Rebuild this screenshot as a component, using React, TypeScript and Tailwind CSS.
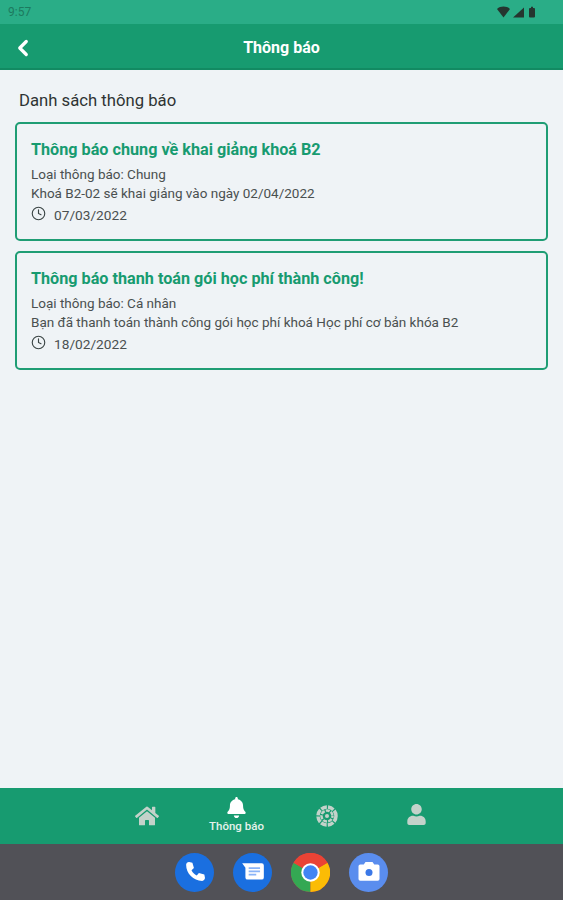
import { ChevronLeft } from "lucide-react";
import { FaBell, FaHome, FaUser } from "react-icons/fa";

const notifications = [
  {
    title: "Thông báo chung về khai giảng khoá B2",
    type: "Loại thông báo: Chung",
    body: "Khoá B2-02 sẽ khai giảng vào ngày 02/04/2022",
    date: "07/03/2022",
  },
  {
    title: "Thông báo thanh toán gói học phí thành công!",
    type: "Loại thông báo: Cá nhân",
    body: "Bạn đã thanh toán thành công gói học phí khoá Học phí cơ bản khóa B2",
    date: "18/02/2022",
  },
];

const ClockIcon = () => (
  <svg width="15" height="15" viewBox="0 0 24 24" fill="none" stroke="#3a4444" strokeWidth="1.8" strokeLinecap="round">
    <circle cx="12" cy="12" r="10" />
    <path d="M12 6v6l4 2" />
  </svg>
);

const StatusBar = () => (
  <div className="h-[24px] bg-[#2aad87] flex items-center justify-between pl-[8px] pr-[26px]">
    <span className="text-[12px] text-[#1d7a5f]">9:57</span>
    <svg width="40" height="13" viewBox="0 0 40 13" fill="#25352f">
      <path d="M0 3C3.500-.2 9.500-.2 13 3L6.500 11.500z" />
      <path d="M16 11.500L27 1.500v10z" />
      <path d="M32 3q0-1 1-1h1V.8h2V2h1q1 0 1 1v7.500q0 1-1 1h-4q-1 0-1-1z" />
    </svg>
  </div>
);

const Header = () => (
  <div className="h-[46px] pt-[3px] bg-[#179b70] border-b-[2px] border-[#128a62] relative flex items-center justify-center">
    <ChevronLeft size={26} strokeWidth={3} className="absolute left-[10px] top-[11px] text-white" />
    <span className="text-[16px] font-bold text-white">Thông báo</span>
  </div>
);

const NotificationCard = ({ title, type, body, date }: (typeof notifications)[number]) => (
  <div className="h-[119px] rounded-[5px] border-2 border-[#1f9d74] pl-[14px] pr-[10px] pt-[16px]">
    <p className="text-[16.200px] leading-[20px] font-bold text-[#179b70]">{title}</p>
    <p className="mt-[4px] text-[13.500px] leading-[20px] text-[#4a5050]">{type}</p>
    <p className="text-[13.500px] leading-[19px] text-[#4a5050]">{body}</p>
    <div className="mt-[2px] flex items-center gap-[8px]">
      <span className="-mt-[4px]">
        <ClockIcon />
      </span>
      <span className="text-[13.700px] leading-[20px] text-[#4a5050]">{date}</span>
    </div>
  </div>
);

const DockIcons = () => (
  <div className="h-[56px] bg-[#515157] flex items-center justify-center gap-[19px]">
    <div className="w-[39px] h-[39px] rounded-full bg-[#1a6fe0] flex items-center justify-center">
      <svg width="26" height="26" viewBox="0 0 24 24" fill="#fff">
        <path d="M6.600 2.800l3 .6 1.400 5-2.200 2c1 2.200 2.600 3.800 4.800 4.800l2-2.200 5 1.400.6 3c.1 1.400-1 2.800-2.600 2.800C10.500 20.200 3.800 13.500 3.800 5.400c0-1.600 1.400-2.700 2.800-2.600z" />
      </svg>
    </div>
    <div className="w-[39px] h-[39px] rounded-full bg-[#1a6fe0] flex items-center justify-center">
      <svg width="26" height="26" viewBox="0 0 24 24">
        <path d="M2 4h18a2 2 0 0 1 2 2v11a2 2 0 0 1-2 2H7a2 2 0 0 1-2-2V8z" fill="#fff" />
        <path d="M8 8.500h10.500M8 11.500h10.500M8 14.500h7" stroke="#8ab4f8" strokeWidth="1.600" />
      </svg>
    </div>
    <svg width="39" height="39" viewBox="0 0 38 38">
      <circle cx="19" cy="19" r="19" fill="#ea4335" />
      <path d="M19 19L2.500 9.500A19 19 0 0 0 19 38z" fill="#34a853" />
      <path d="M19 19L19 38A19 19 0 0 0 35.500 9.500z" fill="#fbbc05" />
      <path d="M19 19L35.500 9.500A19 19 0 0 0 2.500 9.500z" fill="#ea4335" />
      <circle cx="19" cy="19" r="9" fill="#fff" />
      <circle cx="19" cy="19" r="7" fill="#4285f4" />
    </svg>
    <div className="w-[39px] h-[39px] rounded-full bg-[#5a8dee] flex items-center justify-center">
      <svg width="28" height="28" viewBox="0 0 24 24">
        <path d="M3 7a1.500 1.500 0 0 1 1.500-1.500h3L9 3.500h6l1.500 2h3A1.500 1.500 0 0 1 21 7v11a1.500 1.500 0 0 1-1.500 1.500h-15A1.500 1.500 0 0 1 3 18z" fill="#fff" />
        <circle cx="12" cy="12.500" r="3" fill="#3b78e7" />
      </svg>
    </div>
  </div>
);

const BottomNav = () => (
  <div className="h-[56px] bg-[#179b70] flex justify-center">
    <div className="w-[80px] mr-[10px] flex justify-center pt-[16px]">
      <FaHome size={24} className="text-[#c3d2ca]" />
    </div>
    <div className="w-[80px] flex flex-col items-center pt-[9px]">
      <FaBell size={21} className="text-white" />
      <span className="mt-[1px] text-[11.500px] leading-[15px] font-medium text-[#e6f2ec]">Thông báo</span>
    </div>
    <div className="w-[80px] ml-[10px] flex justify-center pt-[17px]">
      <svg width="22" height="22" viewBox="0 0 22 22" fill="none" stroke="#c3d2ca">
        <circle cx="11" cy="11" r="9" strokeWidth="3.500" strokeDasharray="6 1.200" />
        <circle cx="11" cy="11" r="5.500" strokeWidth="2.500" strokeDasharray="4 1.200" strokeDashoffset="2" />
        <circle cx="11" cy="11" r="2" fill="#c3d2ca" stroke="none" />
      </svg>
    </div>
    <div className="w-[80px] ml-[10px] flex justify-center pt-[16px]">
      <FaUser size={21} className="text-[#c3d2ca]" />
    </div>
  </div>
);

const App = () => {
  return (
    <div className="w-[563px] h-[900px] flex flex-col bg-[#eff3f6] font-['Roboto',sans-serif]">
      <StatusBar />
      <Header />
      <div className="flex-1 px-[15px] pt-[19px]">
        <p className="ml-[4px] text-[16.700px] leading-[24px] text-[#2e3333]">Danh sách thông báo</p>
        <div className="mt-[9px] flex flex-col gap-[10px]">
          {notifications.map((item) => (
            <NotificationCard key={item.date} {...item} />
          ))}
        </div>
      </div>
      <BottomNav />
      <DockIcons />
    </div>
  );
};

export default App;
